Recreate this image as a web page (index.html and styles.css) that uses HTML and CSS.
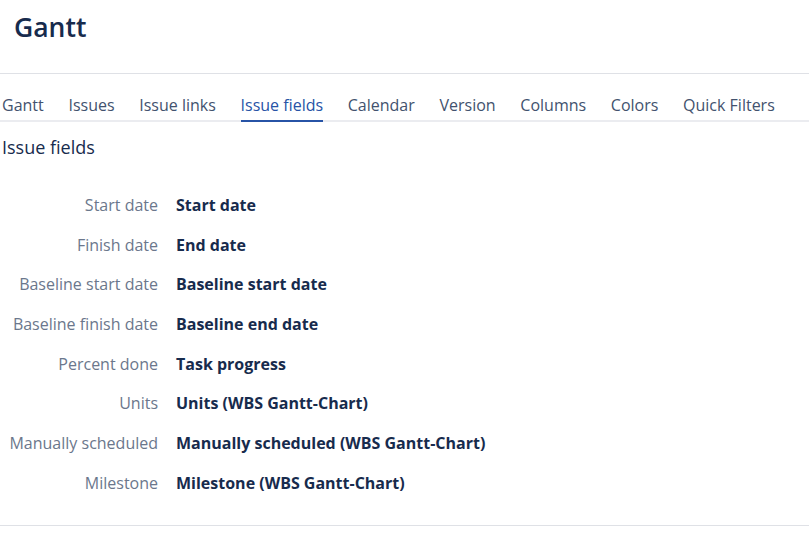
FILE: index.html
```html
<!DOCTYPE html>
<html lang="en">
<head>
  <meta charset="UTF-8">
  <meta name="viewport" content="width=device-width, initial-scale=1.0">
  <title>Gantt</title>
  <link rel="stylesheet" href="styles.css">
</head>
<body>
  <div class="page">
    <h1 class="title">Gantt</h1>

    <nav class="tabs">
      <a class="tab">Gantt</a>
      <a class="tab">Issues</a>
      <a class="tab">Issue links</a>
      <a class="tab active">Issue fields</a>
      <a class="tab">Calendar</a>
      <a class="tab">Version</a>
      <a class="tab">Columns</a>
      <a class="tab">Colors</a>
      <a class="tab">Quick Filters</a>
    </nav>

    <h2 class="section-title">Issue fields</h2>

    <div class="fields">
      <div class="label">Start date</div>
      <div class="value">Start date</div>
      <div class="label">Finish date</div>
      <div class="value">End date</div>
      <div class="label">Baseline start date</div>
      <div class="value">Baseline start date</div>
      <div class="label">Baseline finish date</div>
      <div class="value">Baseline end date</div>
      <div class="label">Percent done</div>
      <div class="value">Task progress</div>
      <div class="label">Units</div>
      <div class="value">Units (WBS Gantt-Chart)</div>
      <div class="label">Manually scheduled</div>
      <div class="value">Manually scheduled (WBS Gantt-Chart)</div>
      <div class="label">Milestone</div>
      <div class="value">Milestone (WBS Gantt-Chart)</div>
    </div>
  </div>
</body>
</html>
```

FILE: styles.css
```css
body {
  margin: 0;
  font-family: "Open Sans", "Noto Sans", sans-serif;
  color: #172b4d;
  background: #fff;
}

.page {
  width: 809px;
}

.title {
  margin: 0;
  padding: 9px 0 0 14px;
  height: 64px;
  font-size: 26.5px;
  font-weight: 600;
  line-height: 36px;
  border-bottom: 1px solid #dfe1e6;
}

.tabs {
  display: flex;
  gap: 24.7px;
  margin-top: 19px;
  padding-left: 2px;
  border-bottom: 2px solid #ebecf0;
}

.tab {
  font-size: 16px;
  line-height: 24px;
  color: #42526e;
  padding-bottom: 3px;
  margin-bottom: -2px;
  border-bottom: 2px solid transparent;
}

.tab.active {
  color: #2753a6;
  border-bottom-color: #2753a6;
}

.section-title {
  margin: 11px 0 0 2px;
  font-size: 18px;
  font-weight: 400;
  line-height: 28px;
}

.fields {
  display: grid;
  grid-template-columns: 158px auto;
  column-gap: 18px;
  row-gap: 13.7px;
  margin-top: 31px;
  padding-bottom: 29px;
  border-bottom: 1px solid #dfe1e6;
  font-size: 16px;
  line-height: 26px;
}

.label {
  text-align: right;
  color: #6b778c;
  white-space: nowrap;
}

.value {
  font-weight: 700;
  color: #172b4d;
  white-space: nowrap;
}
```
